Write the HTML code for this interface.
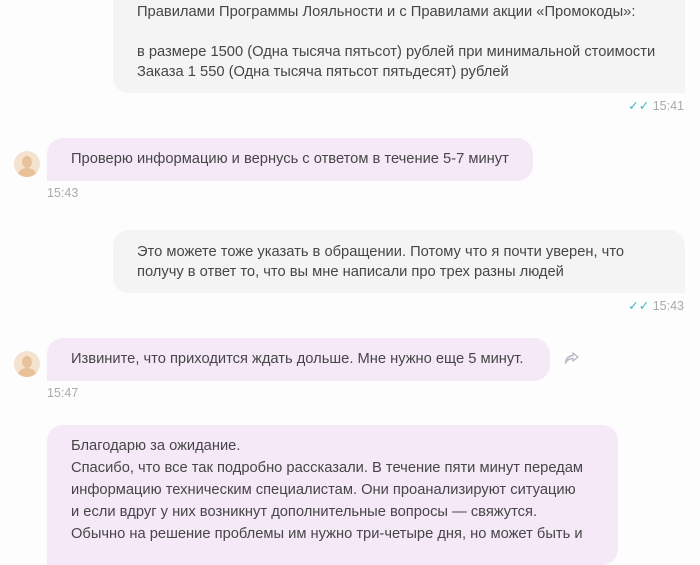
<html><head><style>
body{margin:0;width:700px;height:535px;background:#fdfdfd;font-family:"Liberation Sans",sans-serif;font-size:14.7px;color:#464646;position:relative;overflow:hidden}
.b{position:absolute;line-height:20px;box-sizing:border-box;white-space:nowrap}
.u{background:#f4f4f4;border-radius:16px 16px 0 16px;left:113px;width:572px;padding:0 24px}
.o{background:#f5e9f8;border-radius:16px 16px 16px 0;left:47px;padding:0 24px}
.t{position:absolute;font-size:12.5px;color:#aaa}
.av{position:absolute;left:14px;width:26px;height:26px;border-radius:50%;background:#f3e3cf;overflow:hidden}
.av:before{content:"";position:absolute;left:8px;top:5px;width:10px;height:12px;border-radius:50%;background:#e8c19a}
.av:after{content:"";position:absolute;left:4px;top:17px;width:18px;height:14px;border-radius:50%;background:#e8c19a}
</style></head><body>
<div class="b u" style="top:-20px;height:113px;padding-top:22px">Правилами Программы Лояльности и с Правилами акции «Промокоды»:<br><br>в размере 1500 (Одна тысяча пятьсот) рублей при минимальной стоимости<br>Заказа 1 550 (Одна тысяча пятьсот пятьдесят) рублей</div>
<div class="t" style="top:98px;right:16px"><span style="color:#3bb5d0">✓✓</span> 15:41</div>
<div class="av" style="top:151px"></div>
<div class="b o" style="top:138px;width:486px;height:43px;padding-top:11px">Проверю информацию и вернусь с ответом в течение 5-7 минут</div>
<div class="t" style="top:186px;left:47px">15:43</div>
<div class="b u" style="top:230px;height:63px;padding-top:12px">Это можете тоже указать в обращении. Потому что я почти уверен, что<br>получу в ответ то, что вы мне написали про трех разны людей</div>
<div class="t" style="top:298px;right:16px"><span style="color:#3bb5d0">✓✓</span> 15:43</div>
<div class="av" style="top:351px"></div>
<div class="b o" style="top:338px;width:503px;height:43px;padding-top:11px">Извините, что приходится ждать дольше. Мне нужно еще 5 минут.</div>
<svg style="position:absolute;left:564px;top:351px" width="16" height="14" viewBox="0 0 16 14"><path d="M9 2l5 4-5 4V7.5C5 7.5 3 9 1.5 12 2 7.5 4.5 5 9 4.5z" fill="none" stroke="#b8b8c8" stroke-width="1.4" stroke-linejoin="round"/></svg>
<div class="t" style="top:386px;left:47px">15:47</div>
<div class="b o" style="top:425px;width:571px;height:140px;padding-top:10px;line-height:22px">Благодарю за ожидание.<br>Спасибо, что все так подробно рассказали. В течение пяти минут передам<br>информацию техническим специалистам. Они проанализируют ситуацию<br>и если вдруг у них возникнут дополнительные вопросы — свяжутся.<br>Обычно на решение проблемы им нужно три-четыре дня, но может быть и</div>
</body></html>
